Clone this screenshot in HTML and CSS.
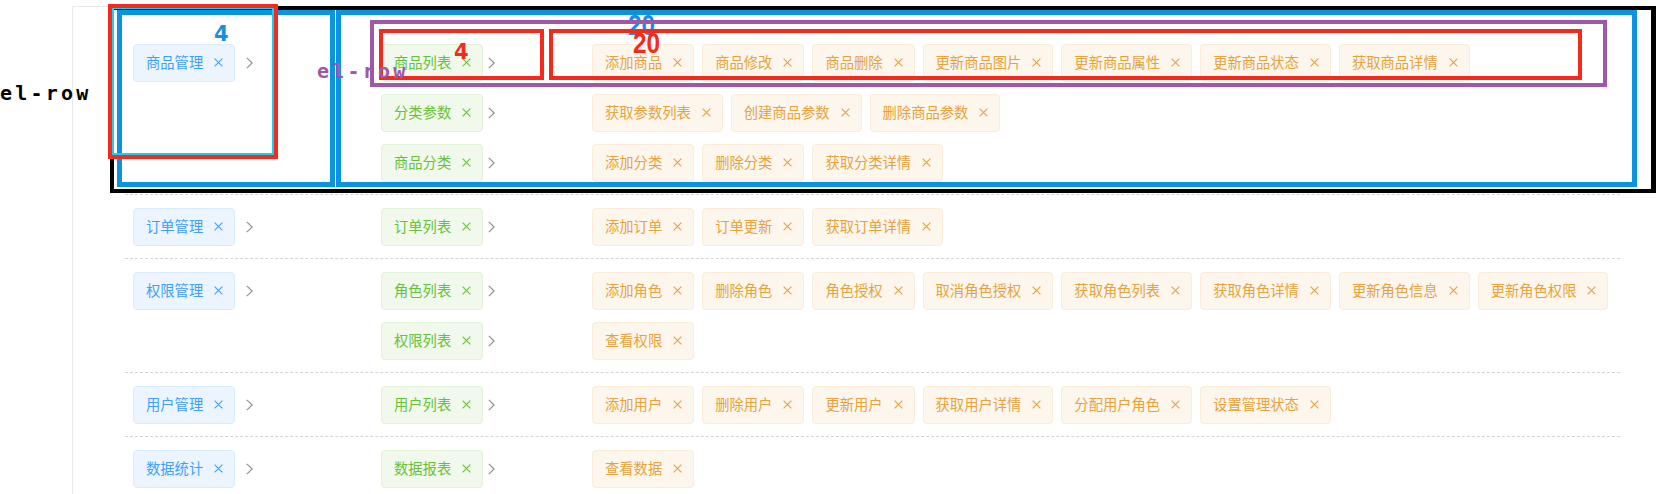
FILE: index.html
```html
<!DOCTYPE html>
<html lang="zh-CN">
<head>
<meta charset="utf-8">
<title>权限</title>
<link rel="stylesheet" href="styles.css">
</head>
<body>
<svg class="defs" width="0" height="0" aria-hidden="true">
  <defs>
    <symbol id="ic-x" viewBox="0 0 9 9"><path d="M0.6 0.6 L8.4 8.4 M8.4 0.6 L0.6 8.4" fill="none" stroke="currentColor" stroke-width="1.1"/></symbol>
    <symbol id="ic-arrow" viewBox="0 0 7 12"><path d="M0.8 0.8 L6.2 6 L0.8 11.2" fill="none" stroke="currentColor" stroke-width="1.1"/></symbol>
  </defs>
</svg>

<div class="panel">
  <!-- 商品管理 -->
  <div class="perm-row">
    <div class="lv1"><span class="tag tag-blue">商品管理<svg class="x"><use href="#ic-x"/></svg></span><svg class="arrow arrow-1"><use href="#ic-arrow"/></svg></div>
    <div class="lv2-list">
      <div class="sub-row">
        <div class="lv2"><span class="tag tag-green">商品列表<svg class="x"><use href="#ic-x"/></svg></span><svg class="arrow arrow-2"><use href="#ic-arrow"/></svg></div>
        <div class="lv3">
          <span class="tag tag-orange">添加商品<svg class="x"><use href="#ic-x"/></svg></span>
          <span class="tag tag-orange">商品修改<svg class="x"><use href="#ic-x"/></svg></span>
          <span class="tag tag-orange">商品删除<svg class="x"><use href="#ic-x"/></svg></span>
          <span class="tag tag-orange">更新商品图片<svg class="x"><use href="#ic-x"/></svg></span>
          <span class="tag tag-orange">更新商品属性<svg class="x"><use href="#ic-x"/></svg></span>
          <span class="tag tag-orange">更新商品状态<svg class="x"><use href="#ic-x"/></svg></span>
          <span class="tag tag-orange">获取商品详情<svg class="x"><use href="#ic-x"/></svg></span>
        </div>
      </div>
      <div class="sub-row">
        <div class="lv2"><span class="tag tag-green">分类参数<svg class="x"><use href="#ic-x"/></svg></span><svg class="arrow arrow-2"><use href="#ic-arrow"/></svg></div>
        <div class="lv3">
          <span class="tag tag-orange">获取参数列表<svg class="x"><use href="#ic-x"/></svg></span>
          <span class="tag tag-orange">创建商品参数<svg class="x"><use href="#ic-x"/></svg></span>
          <span class="tag tag-orange">删除商品参数<svg class="x"><use href="#ic-x"/></svg></span>
        </div>
      </div>
      <div class="sub-row">
        <div class="lv2"><span class="tag tag-green">商品分类<svg class="x"><use href="#ic-x"/></svg></span><svg class="arrow arrow-2"><use href="#ic-arrow"/></svg></div>
        <div class="lv3">
          <span class="tag tag-orange">添加分类<svg class="x"><use href="#ic-x"/></svg></span>
          <span class="tag tag-orange">删除分类<svg class="x"><use href="#ic-x"/></svg></span>
          <span class="tag tag-orange">获取分类详情<svg class="x"><use href="#ic-x"/></svg></span>
        </div>
      </div>
    </div>
  </div>

  <!-- 订单管理 -->
  <div class="perm-row">
    <div class="lv1"><span class="tag tag-blue">订单管理<svg class="x"><use href="#ic-x"/></svg></span><svg class="arrow arrow-1"><use href="#ic-arrow"/></svg></div>
    <div class="lv2-list">
      <div class="sub-row">
        <div class="lv2"><span class="tag tag-green">订单列表<svg class="x"><use href="#ic-x"/></svg></span><svg class="arrow arrow-2"><use href="#ic-arrow"/></svg></div>
        <div class="lv3">
          <span class="tag tag-orange">添加订单<svg class="x"><use href="#ic-x"/></svg></span>
          <span class="tag tag-orange">订单更新<svg class="x"><use href="#ic-x"/></svg></span>
          <span class="tag tag-orange">获取订单详情<svg class="x"><use href="#ic-x"/></svg></span>
        </div>
      </div>
    </div>
  </div>

  <!-- 权限管理 -->
  <div class="perm-row">
    <div class="lv1"><span class="tag tag-blue">权限管理<svg class="x"><use href="#ic-x"/></svg></span><svg class="arrow arrow-1"><use href="#ic-arrow"/></svg></div>
    <div class="lv2-list">
      <div class="sub-row">
        <div class="lv2"><span class="tag tag-green">角色列表<svg class="x"><use href="#ic-x"/></svg></span><svg class="arrow arrow-2"><use href="#ic-arrow"/></svg></div>
        <div class="lv3">
          <span class="tag tag-orange">添加角色<svg class="x"><use href="#ic-x"/></svg></span>
          <span class="tag tag-orange">删除角色<svg class="x"><use href="#ic-x"/></svg></span>
          <span class="tag tag-orange">角色授权<svg class="x"><use href="#ic-x"/></svg></span>
          <span class="tag tag-orange">取消角色授权<svg class="x"><use href="#ic-x"/></svg></span>
          <span class="tag tag-orange">获取角色列表<svg class="x"><use href="#ic-x"/></svg></span>
          <span class="tag tag-orange">获取角色详情<svg class="x"><use href="#ic-x"/></svg></span>
          <span class="tag tag-orange">更新角色信息<svg class="x"><use href="#ic-x"/></svg></span>
          <span class="tag tag-orange">更新角色权限<svg class="x"><use href="#ic-x"/></svg></span>
        </div>
      </div>
      <div class="sub-row">
        <div class="lv2"><span class="tag tag-green">权限列表<svg class="x"><use href="#ic-x"/></svg></span><svg class="arrow arrow-2"><use href="#ic-arrow"/></svg></div>
        <div class="lv3">
          <span class="tag tag-orange">查看权限<svg class="x"><use href="#ic-x"/></svg></span>
        </div>
      </div>
    </div>
  </div>

  <!-- 用户管理 -->
  <div class="perm-row">
    <div class="lv1"><span class="tag tag-blue">用户管理<svg class="x"><use href="#ic-x"/></svg></span><svg class="arrow arrow-1"><use href="#ic-arrow"/></svg></div>
    <div class="lv2-list">
      <div class="sub-row">
        <div class="lv2"><span class="tag tag-green">用户列表<svg class="x"><use href="#ic-x"/></svg></span><svg class="arrow arrow-2"><use href="#ic-arrow"/></svg></div>
        <div class="lv3">
          <span class="tag tag-orange">添加用户<svg class="x"><use href="#ic-x"/></svg></span>
          <span class="tag tag-orange">删除用户<svg class="x"><use href="#ic-x"/></svg></span>
          <span class="tag tag-orange">更新用户<svg class="x"><use href="#ic-x"/></svg></span>
          <span class="tag tag-orange">获取用户详情<svg class="x"><use href="#ic-x"/></svg></span>
          <span class="tag tag-orange">分配用户角色<svg class="x"><use href="#ic-x"/></svg></span>
          <span class="tag tag-orange">设置管理状态<svg class="x"><use href="#ic-x"/></svg></span>
        </div>
      </div>
    </div>
  </div>

  <!-- 数据统计 -->
  <div class="perm-row">
    <div class="lv1"><span class="tag tag-blue">数据统计<svg class="x"><use href="#ic-x"/></svg></span><svg class="arrow arrow-1"><use href="#ic-arrow"/></svg></div>
    <div class="lv2-list">
      <div class="sub-row">
        <div class="lv2"><span class="tag tag-green">数据报表<svg class="x"><use href="#ic-x"/></svg></span><svg class="arrow arrow-2"><use href="#ic-arrow"/></svg></div>
        <div class="lv3">
          <span class="tag tag-orange">查看数据<svg class="x"><use href="#ic-x"/></svg></span>
        </div>
      </div>
    </div>
  </div>
</div>

<!-- annotation overlay -->
<div class="ann box-black"></div>
<div class="ann box-blue box-blue1"></div>
<div class="ann box-blue box-blue2"></div>
<div class="ann lbl lbl-20 lbl-20b">20</div>
<div class="ann box-purple"></div>
<div class="ann box-cyan"></div>
<div class="ann box-red box-red1"></div>
<div class="ann box-red box-red2"></div>
<div class="ann box-red box-red3"></div>
<div class="ann lbl lbl-4 lbl-4b">4</div>
<div class="ann lbl lbl-4 lbl-4r">4</div>
<div class="ann lbl lbl-20 lbl-20r">20</div>
<div class="ann lbl lbl-row lbl-row-black">el-row</div>
<div class="ann lbl lbl-row lbl-row-purple">el-row</div>
</body>
</html>
```

FILE: styles.css
```css
html, body {
  margin: 0;
  padding: 0;
  background: #ffffff;
}

body {
  position: relative;
  width: 1662px;
  height: 494px;
  overflow: hidden;
  font-family: "Noto Sans CJK SC", "Noto Sans", sans-serif;
}

.defs {
  position: absolute;
  width: 0;
  height: 0;
}

/* ---------- content ---------- */
.panel {
  width: 1495px;
  margin: 6px 0 0 72px;
  border-left: 1px solid #e8e8e8;
  border-top: 1px solid #e8e8e8;
  padding: 24px 22px 0 52px;
  min-height: 520px;
}

.perm-row {
  display: grid;
  grid-template-columns: 249px minmax(0, 1fr);
  padding: 6.5px 0;
  border-bottom: 1px dashed #d4d4d4;
}

.lv1 {
  display: flex;
  align-items: center;
  align-self: start;
}

.lv1 .tag {
  margin: 6px 0 6px 8px;
}

.sub-row {
  display: grid;
  grid-template-columns: 210px minmax(0, 1fr);
}

.lv2 {
  display: flex;
  align-items: center;
  align-self: center;
}

.lv2 .tag {
  margin: 6px 0 6px 7px;
}

.lv3 {
  display: flex;
  flex-wrap: wrap;
  align-items: center;
}

.lv3 .tag {
  margin: 6px 0 6px 8px;
}

.tag {
  display: inline-flex;
  align-items: center;
  box-sizing: border-box;
  height: 38px;
  padding: 0 11px 0 12px;
  border: 1px solid;
  border-radius: 4px;
  font-size: 14.3px;
  line-height: 1;
  white-space: nowrap;
}

.tag .x {
  width: 9px;
  height: 9px;
  margin-left: 11px;
  flex: none;
}

.tag-blue {
  background: #ecf5ff;
  border-color: #d9ecff;
  color: #409eff;
}

.tag-green {
  background: #f0f9eb;
  border-color: #e1f3d8;
  color: #67c23a;
}

.tag-orange {
  background: #fdf6ec;
  border-color: #faecd8;
  color: #e6a23c;
}

.arrow {
  width: 7px;
  height: 12px;
  color: #8a8d93;
  flex: none;
}

.arrow-1 {
  margin-left: 11px;
}

.arrow-2 {
  margin-left: 5px;
}

/* ---------- annotation overlay ---------- */
.ann {
  position: absolute;
  box-sizing: border-box;
  pointer-events: none;
}

.box-black {
  left: 110px;
  top: 6px;
  width: 1546px;
  height: 187px;
  border: 4px solid #000000;
  border-right-width: 5px;
}

.box-blue {
  border: 5px solid #0b93e2;
}

.box-blue1 {
  left: 117px;
  top: 10px;
  width: 218px;
  height: 177px;
}

.box-blue2 {
  left: 336px;
  top: 10px;
  width: 1301px;
  height: 177px;
}

.box-purple {
  left: 370px;
  top: 20px;
  width: 1237px;
  height: 67px;
  border: 4px solid #9d58a8;
}

.box-cyan {
  left: 110px;
  top: 5px;
  width: 166px;
  height: 152px;
  border: 4px solid #16cff2;
}

.box-red {
  border: 4px solid #f42a1c;
}

.box-red1 {
  left: 108px;
  top: 4px;
  width: 170px;
  height: 155px;
}

.box-red2 {
  left: 379px;
  top: 29px;
  width: 165px;
  height: 51px;
}

.box-red3 {
  left: 549px;
  top: 29px;
  width: 1033px;
  height: 51px;
}

.lbl {
  line-height: 1;
  font-weight: bold;
  white-space: nowrap;
}

.lbl-4 {
  font-family: "DejaVu Sans", "Liberation Sans", sans-serif;
  font-size: 21px;
}

.lbl-4b {
  left: 214px;
  top: 24px;
  color: #1a8fe0;
}

.lbl-4r {
  left: 454px;
  top: 42px;
  color: #f42a1c;
}

.lbl-20 {
  font-family: "Liberation Sans", Arial, sans-serif;
  font-size: 29px;
  transform: scaleX(0.84);
  transform-origin: left top;
}

.lbl-20b {
  left: 628px;
  top: 11px;
  color: #1a8fe0;
}

.lbl-20r {
  left: 633px;
  top: 29px;
  color: #f42a1c;
}

.lbl-row {
  font-family: "DejaVu Sans Mono", "Liberation Mono", monospace;
  font-size: 20px;
  letter-spacing: 3.2px;
}

.lbl-row-black {
  left: 0;
  top: 83px;
  color: #000000;
}

.lbl-row-purple {
  left: 317px;
  top: 61px;
  color: #9d58a8;
}
```
